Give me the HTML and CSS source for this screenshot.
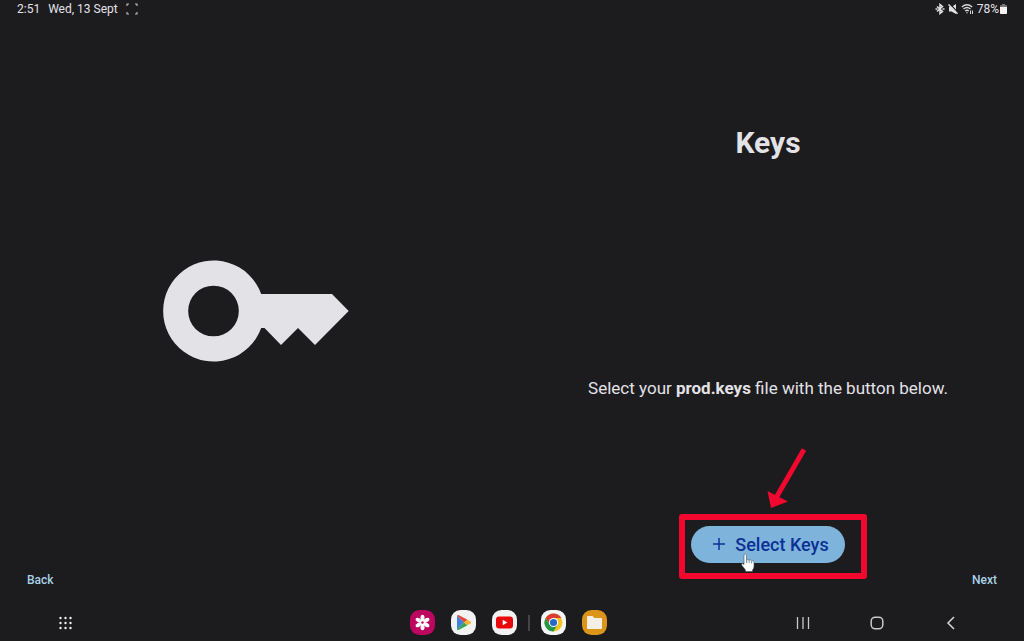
FILE: index.html
```html
<!DOCTYPE html>
<html lang="en">
<head>
<meta charset="utf-8">
<meta name="viewport" content="width=device-width, initial-scale=1">
<title>Keys</title>
<link rel="stylesheet" href="styles.css">
</head>
<body>
<div class="screen">
  <header class="status">
    <div class="status-left">
      <span>2:51</span>
      <span>Wed, 13 Sept</span>
      <svg width="12" height="12" viewBox="0 0 12 12" fill="none" stroke="#bbb" stroke-width="1.2" aria-hidden="true"><path d="M1 3V1H3M9 1H11V3M11 9V11H9M3 11H1V9"/></svg>
    </div>
    <div class="status-right">
      <svg width="10" height="12" viewBox="0 0 10 12" fill="none" stroke="#e2e2e2" stroke-width="1.5" aria-hidden="true"><path d="M2 3.500L7.500 8.500L5 10.500V1.500L7.500 3.500L2 8.500"/><path d="M0.500 6H2.500M7.500 6H9.500"/></svg>
      <svg width="10" height="12" viewBox="0 0 10 12" aria-hidden="true"><path d="M1 4H3.500L8 1V11L3.500 8.500H1Z" fill="#e2e2e2"/><path d="M1.500 0.500L10 9.500" stroke="#1c1b1e" stroke-width="1.200"/><path d="M0.500 1.500L9.500 10.800" stroke="#e2e2e2" stroke-width="1.500"/></svg>
      <svg width="13" height="12" viewBox="0 0 13 12" fill="none" stroke="#d8d8d8" stroke-width="1.300" aria-hidden="true"><path d="M0.800 4Q6 -0.500 11.200 4M2.500 6Q6 3 9.500 6M4.200 8Q6 6.500 7.800 8"/><circle cx="6" cy="9.800" r="0.700" fill="#d8d8d8" stroke="none"/><path d="M9.500 7.500V11M11.500 11V7.500" stroke-width="1"/></svg>
      <span>78%</span>
      <svg width="7" height="10" viewBox="0 0 7 10" aria-hidden="true"><path d="M2 0H5V1H6Q7 1 7 2V9Q7 10 6 10H1Q0 10 0 9V2Q0 1 1 1H2Z" fill="#777"/><path d="M0 3H7V9Q7 10 6 10H1Q0 10 0 9Z" fill="#f4f4f4"/></svg>
    </div>
  </header>

  <main class="setup">
    <div class="art">
      <svg width="186" height="102" viewBox="163 260 186 102" role="img" aria-label="Key"><path fill="#e3e2e6" fill-rule="evenodd" d="M261.200 294H332L348.700 311L315 345L298 328L281 345L264.500 328H261.200A50.500 50.500 0 1 1 261.200 294ZM213.500 285.700A25.300 25.300 0 1 0 213.500 336.300A25.300 25.300 0 1 0 213.500 285.700Z"/></svg>
    </div>
    <section class="step">
      <h1>Keys</h1>
      <p>Select your <b>prod.keys</b> file with the button below.</p>
      <div class="choose">
        <button class="select" type="button">
          <svg width="14" height="14" viewBox="0 0 14 14" stroke="#0c3195" stroke-width="1.500" aria-hidden="true"><path d="M7 1V13M1 7H13"/></svg>
          <span>Select Keys</span>
        </button>
        <span class="highlight"></span>
        <svg class="arrow" width="42" height="62" viewBox="0 0 42 62" aria-hidden="true"><path d="M37 2.500L9.500 50" stroke="#f2082f" stroke-width="5"/><path d="M4 61L0.500 44L10 49L21 54.500Z" fill="#f2082f"/></svg>
        <svg class="pointer" width="14" height="20" viewBox="0 0 14 20" aria-hidden="true"><path d="M3 2Q4.400 0.200 5.500 2V7Q7 6 8 7.300Q9.500 6.300 10.400 7.800Q12.800 7 13 9V13Q13 15.500 11.500 17V18.500H4.500V17L1 12.500Q0 10.500 1.500 10.200L3 11.500Z" fill="#fff" stroke="#435463" stroke-width=".6"/><path d="M5.700 7V10M8.200 7.700V10M10.600 8.200V10.500" stroke="#40576b" stroke-width=".7"/></svg>
      </div>
    </section>
  </main>

  <div class="actions">
    <button type="button">Back</button>
    <button type="button">Next</button>
  </div>

  <nav class="taskbar" aria-label="Taskbar">
    <button class="all" type="button" aria-label="All apps">
      <svg width="14" height="14" viewBox="0 0 14 14" fill="#eee"><circle cx="2.500" cy="2" r="1.200"/><circle cx="7.500" cy="2" r="1.200"/><circle cx="12.500" cy="2" r="1.200"/><circle cx="2.500" cy="7" r="1.200"/><circle cx="7.500" cy="7" r="1.200"/><circle cx="12.500" cy="7" r="1.200"/><circle cx="2.500" cy="12" r="1.200"/><circle cx="7.500" cy="12" r="1.200"/><circle cx="12.500" cy="12" r="1.200"/></svg>
    </button>
    <div class="apps">
      <button type="button" aria-label="Gallery"><svg width="25" height="25" viewBox="0 0 25 25"><rect width="25" height="25" rx="9.500" fill="#bd0660"/><g fill="#fff"><ellipse cx="12.500" cy="7.700" rx="2" ry="3"/><ellipse cx="12.500" cy="7.700" rx="2" ry="3" transform="rotate(60 12.500 12.500)"/><ellipse cx="12.500" cy="7.700" rx="2" ry="3" transform="rotate(120 12.500 12.500)"/><ellipse cx="12.500" cy="7.700" rx="2" ry="3" transform="rotate(180 12.500 12.500)"/><ellipse cx="12.500" cy="7.700" rx="2" ry="3" transform="rotate(240 12.500 12.500)"/><ellipse cx="12.500" cy="7.700" rx="2" ry="3" transform="rotate(300 12.500 12.500)"/><circle cx="12.500" cy="12.500" r="3"/></g><circle cx="12.500" cy="12.500" r="1.200" fill="#bd0660"/></svg></button>
      <button type="button" aria-label="Play Store"><svg width="25" height="25" viewBox="0 0 25 25"><rect width="25" height="25" rx="9.500" fill="#f2f2f2"/><path d="M6 5.500V19.500L13 12.500Z" fill="#3f82d8"/><path d="M6 5.500Q6.500 4.500 8 5.300L16.500 9.800L13 12.500Z" fill="#e1483e"/><path d="M6 19.500Q6.500 20.500 8 19.700L16.500 15.200L13 12.500Z" fill="#35a457"/><path d="M16.500 9.800L19.500 11.500Q20.800 12.500 19.500 13.500L16.500 15.200L13 12.500Z" fill="#f4b629"/></svg></button>
      <button type="button" aria-label="YouTube"><svg width="25" height="25" viewBox="0 0 25 25"><rect width="25" height="25" rx="9.500" fill="#f2f2f2"/><rect x="4" y="6.500" width="17" height="12" rx="3" fill="#e9090d"/><path d="M10.700 9.700V15.300L15.500 12.500Z" fill="#fff"/></svg></button>
      <span class="divider"></span>
      <button type="button" aria-label="Chrome"><svg width="25" height="25" viewBox="0 0 25 25"><rect width="25" height="25" rx="9.500" fill="#f5f5f5"/><circle cx="12.500" cy="12.500" r="9" fill="#f5c421"/><path d="M12.500 12.500L8.800 14.700L4.700 8A9 9 0 0 1 20.300 8H12.500Z" fill="#da3d31"/><path d="M4.700 8A9 9 0 0 0 12.500 21.500L16.400 14.700L12.500 12.500L8.600 14.700Z" fill="#249849"/><circle cx="12.500" cy="12.500" r="4.600" fill="#fff"/><circle cx="12.500" cy="12.500" r="3.600" fill="#2669c8"/></svg></button>
      <button type="button" aria-label="My Files"><svg width="25" height="25" viewBox="0 0 25 25"><rect width="25" height="25" rx="9.500" fill="#dc9518"/><path d="M5 7Q5 6 6 6H10.500L12.500 8H19Q20 8 20 9V18Q20 19 19 19H6Q5 19 5 18Z" fill="#f3efe7"/></svg></button>
    </div>
    <div class="system">
      <button type="button" aria-label="Recents"><svg width="14" height="14" viewBox="0 0 14 14" stroke="#c9c9ca" stroke-width="1.300"><path d="M1.500 1V13M7 1V13M12.500 1V13"/></svg></button>
      <button type="button" aria-label="Home"><svg width="14" height="14" viewBox="0 0 14 14" fill="none" stroke="#c9c9ca" stroke-width="1.500"><rect x="1.200" y="1.200" width="11.600" height="11.600" rx="4"/></svg></button>
      <button type="button" aria-label="Go back"><svg width="14" height="14" viewBox="0 0 14 14" fill="none" stroke="#d5d5d6" stroke-width="1.500"><path d="M10 1L4 7L10 13"/></svg></button>
    </div>
  </nav>
</div>
</body>
</html>
```
FILE: styles.css
```css
* {
  box-sizing: border-box;
}

body {
  margin: 0;
  background: #1c1b1e;
  color: #e3e2e6;
  font-family: Roboto, "Liberation Sans", sans-serif;
}

button {
  display: flex;
  align-items: center;
  padding: 0;
  border: 0;
  background: none;
  color: inherit;
  font: inherit;
  cursor: pointer;
}

svg {
  display: block;
  flex: none;
}

.screen {
  display: grid;
  grid-template-rows: 20px 1fr 44px 39px;
  min-height: 100vh;
}

.status {
  display: flex;
  justify-content: space-between;
  align-items: center;
  padding: 0 17px 2px;
  font-size: 12px;
  line-height: 18px;
}

.status-left {
  display: flex;
  align-items: center;
  gap: 8px;
}

.status-right {
  display: flex;
  align-items: center;
  gap: 3px;
}

.status-right span {
  margin-right: -2px;
}

.setup {
  grid-row: 2 / 4;
  grid-column: 1;
  display: grid;
  grid-template-columns: 1fr 1fr;
}

.art {
  display: grid;
  place-items: center;
}

.step {
  display: grid;
  grid-template-rows: 1fr 1fr 68px;
  place-items: center;
  padding-bottom: 24px;
  text-align: center;
}

h1 {
  margin: 0;
  font-size: 30px;
  font-weight: 700;
  line-height: 36px;
}

p {
  margin: 0;
  font-size: 17px;
  line-height: 24px;
}

.choose {
  position: relative;
}

.select {
  gap: 9px;
  height: 37px;
  padding: 0 16px 0 21px;
  border-radius: 19px;
  background: #7eb3dc;
  color: #0c3195;
  font-size: 18px;
  font-weight: 500;
}

.highlight {
  position: absolute;
  inset: -12px -22px -16px -12px;
  border: 6px solid #f2082f;
  border-radius: 3px;
  pointer-events: none;
}

.arrow {
  position: absolute;
  left: 76px;
  top: -79px;
}

.pointer {
  position: absolute;
  left: 50px;
  top: 27px;
}

.actions {
  grid-row: 3;
  grid-column: 1;
  display: flex;
  justify-content: space-between;
  align-items: center;
  padding: 0 27px;
  color: #a9d2e8;
  font-size: 12px;
  font-weight: 500;
}

.taskbar {
  grid-row: 4;
  display: grid;
  grid-template-columns: 1fr auto 1fr;
  align-items: center;
  padding: 2px 66px 0 58px;
}

.all {
  justify-self: start;
}

.apps {
  display: flex;
  align-items: center;
  gap: 16px;
}

.divider {
  width: 2px;
  height: 16px;
  margin: 0 -5px;
  background: #454548;
}

.system {
  display: flex;
  justify-self: end;
  gap: 60px;
}
```
